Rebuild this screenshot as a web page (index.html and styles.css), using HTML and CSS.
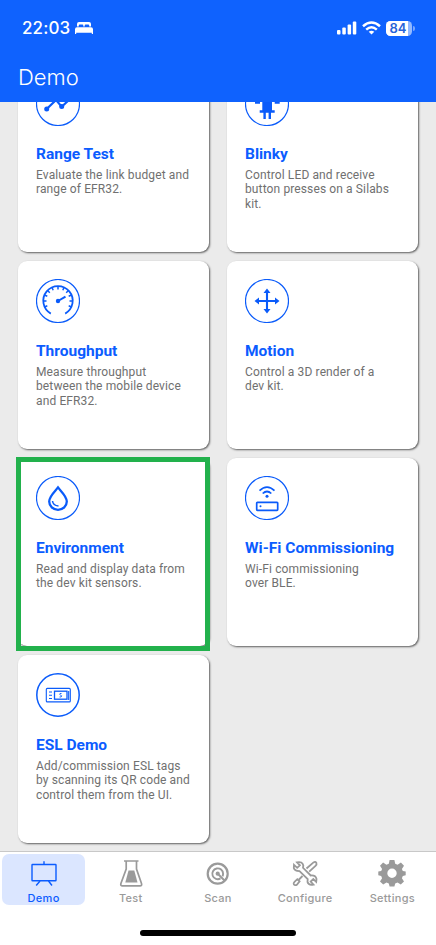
FILE: index.html
```html
<!DOCTYPE html>
<html lang="en">
<head>
<meta charset="utf-8">
<title>Demo</title>
<link rel="stylesheet" href="styles.css">
</head>
<body>
<div class="app">
  <header class="header">
    <div class="status">
      <span class="time">22:03</span>
      <svg class="bed" width="18" height="12" viewBox="0 0 18 12" fill="#fff"><path d="M2 4.600V2Q2 0 4 0H14Q16 0 16 2V4.600H14.200V3.600Q14.200 2.600 13.300 2.600H10.500Q9.700 2.600 9.700 3.400V4.600H8.300V3.400Q8.300 2.600 7.500 2.600H4.700Q3.800 2.600 3.800 3.600V4.600Z"/><path d="M0 12V7.200Q0 5.200 2 5.200H16Q18 5.200 18 7.200V12H16.800V10.700H1.200V12Z"/></svg>
      <svg class="signal" width="20" height="14" viewBox="0 0 20 14" fill="#fff"><rect x="0" y="9" width="3.500" height="4.500" rx="1"/><rect x="5.300" y="6.500" width="3.500" height="7" rx="1"/><rect x="10.600" y="3.500" width="3.500" height="10" rx="1"/><rect x="15.800" y="0.500" width="3.500" height="13" rx="1"/></svg>
      <svg class="wifi" width="19" height="14" viewBox="0 0 19 14" fill="none" stroke="#fff" stroke-width="2.500"><path d="M1 5.200Q9.500-2.200 18 5.200"/><path d="M4.200 8.600Q9.500 4 14.800 8.600"/><path d="M6.700 10.800Q9.500 8.600 12.300 10.800L9.500 13.600Z" fill="#fff" stroke="none"/></svg>
      <span class="battery"><span class="level">84</span></span><span class="cap"></span>
    </div>
    <h1 class="title">Demo</h1>
  </header>

  <main class="grid">
    <section class="card">
      <svg class="icon" viewBox="0 0 44 44"><circle class="ring" cx="22" cy="22" r="21.500"/><path d="M10.700 27L20 18L25.700 24.700L34 17" stroke-width="2.200"/><g class="solid"><circle cx="10.700" cy="27" r="2.500"/><circle cx="20" cy="17.500" r="2"/><circle cx="25.700" cy="24.500" r="2.500"/></g></svg>
      <h2>Range Test</h2>
      <p>Evaluate the link budget and<br>range of EFR32.</p>
    </section>
    <section class="card">
      <svg class="icon" viewBox="0 0 44 44"><circle class="ring" cx="22" cy="22" r="21.500"/><path class="solid" d="M17.300 9H27V28.300H29.700V30.800H26V37H23.600V30.800H20.800V37H18.400V30.800H14.700V28.300H17.300ZM10 17H15V21.800H10ZM29.700 17H34.700V21.800H29.700Z"/></svg>
      <h2>Blinky</h2>
      <p>Control LED and receive<br>button presses on a Silabs<br>kit.</p>
    </section>
    <section class="card">
      <svg class="icon" viewBox="0 0 44 44"><circle class="ring" cx="22" cy="22" r="21.500"/><path d="M14.800 34.600A14.700 14.700 0 1 1 29.200 34.600" stroke-width="1.800"/><path d="M22 7.500V10.500M7.500 22H10.500M36.500 22H33.500M11.800 11.800L13.800 13.800M32.200 11.800L30.200 13.800M8.500 16L11.300 17.200M35.500 16L32.700 17.200M16 8.500L17.200 11.300M28 8.500L26.800 11.300M8.500 28L11.300 26.800M35.500 28L32.700 26.800" stroke-width="1.500"/><path d="M22 22L29.500 17.700" stroke-width="2"/><circle class="solid" cx="22" cy="22" r="2.200"/></svg>
      <h2>Throughput</h2>
      <p>Measure throughput<br>between the mobile device<br>and EFR32.</p>
    </section>
    <section class="card">
      <svg class="icon" viewBox="0 0 44 44"><circle class="ring" cx="22" cy="22" r="21.500"/><path d="M22 12V32M12 22H32" stroke-width="2.100"/><path class="solid" d="M22 9.500L25.500 14H18.500ZM22 34.500L18.500 30H25.500ZM9.500 22L14 18.500V25.500ZM34.500 22L30 25.500V18.500Z"/></svg>
      <h2>Motion</h2>
      <p>Control a 3D render of a<br>dev kit.</p>
    </section>
    <section class="card selected">
      <svg class="icon" viewBox="0 0 44 44"><circle class="ring" cx="22" cy="22" r="21.500"/><path d="M22 11.400C19.500 15 13.200 20 13.200 25.500A8.800 8.300 0 0 0 30.800 25.500C30.800 20 24.500 15 22 11.400Z" stroke-width="2.300"/><path d="M16.500 25Q17 29.500 22.500 30" stroke-width="1.500"/></svg>
      <h2>Environment</h2>
      <p>Read and display data from<br>the dev kit sensors.</p>
    </section>
    <section class="card">
      <svg class="icon" viewBox="0 0 44 44"><circle class="ring" cx="22" cy="22" r="21.500"/><path d="M14.500 14.700Q22 7.500 29.500 14.700M17.700 17.500Q22 13.500 26.300 17.500" stroke-width="1.700"/><circle class="solid" cx="22" cy="20.300" r="1.500"/><rect x="11.700" y="26.300" width="21" height="8" rx=".7" stroke-width="1.700"/><circle class="solid" cx="15.500" cy="30.300" r="1"/></svg>
      <h2>Wi-Fi Commissioning</h2>
      <p>Wi-Fi commissioning<br>over BLE.</p>
    </section>
    <section class="card">
      <svg class="icon" viewBox="0 0 44 44"><circle class="ring bold" cx="22" cy="22" r="21.200"/><rect x="10.300" y="15.400" width="24" height="13.500" rx="1" stroke-width="1.100"/><rect x="18.500" y="18.200" width="12.500" height="8" stroke-width="1.300"/><path d="M13 19H16M13 22.200H16M13 25.500H16M32.700 18V27" stroke-width="1.100"/><path d="M25.500 20.500Q23.500 20 23.700 21.500Q24.500 22.300 25.700 22.800Q25.700 24.500 23.500 24" stroke-width=".9"/></svg>
      <h2>ESL Demo</h2>
      <p>Add/commission ESL tags<br>by scanning its QR code and<br>control them from the UI.</p>
    </section>
  </main>

  <nav class="tabs">
    <a class="tab active"><svg viewBox="0 0 28 28"><rect x="2" y="5.500" width="24" height="16.300" rx=".5" stroke-width="1.400"/><path d="M14 2.200V5.500M10 22L6.200 26.500M18.500 22L22 26.500" stroke-width="1.400"/></svg><span>Demo</span></a>
    <a class="tab"><svg viewBox="0 0 28 28"><path d="M7 2H21.500M9.200 2.500V10L3.900 24.500Q3.200 26.900 5.500 26.900H23Q25.200 26.900 24.500 24.500L19.500 10V2.500" stroke-width="1.700"/><path class="fill" d="M11.500 11.500H17.300L20.500 23.500H8.300Z"/></svg><span>Test</span></a>
    <a class="tab"><svg viewBox="0 0 28 28"><circle cx="13.700" cy="14.700" r="10" stroke-width="2.200"/><path d="M16.500 19.400A5.400 5.400 0 1 1 19.100 14.700Q19.100 16 18.500 17.300" stroke-width="1.900"/><circle class="fill" cx="13.700" cy="14.700" r="2.100"/><path d="M14 15L20.500 21.500" stroke-width="2"/></svg><span>Scan</span></a>
    <a class="tab"><svg viewBox="0 0 28 28"><path d="M3 5.800L6.200 8.800L8.900 6.300L6 3.300Q11.500 2.200 12.300 6.500L12 8.800L19.700 16.500Q24.700 16 25.500 20L25.200 22.800L22.300 20L19.700 22.500L22.500 25.600Q17.500 26.600 16.500 23L16.700 20.200L8.500 12.200Q3.500 12 2.800 9Z" stroke-width="1.800"/><path d="M15.500 9.500L22.500 3.400Q24.500 2.200 25.400 4Q26 5.500 24.500 6.900L18.200 12.600M11.500 17L8 20.500M3.500 22.800L6.300 20.200L8.600 22.400L6.200 25.400Q4 27 2.800 25.200Q2.200 24 3.500 22.800Z" stroke-width="1.800"/></svg><span>Configure</span></a>
    <a class="tab"><svg viewBox="0 0 28 28"><path class="fill" fill-rule="evenodd" d="M11.600 1H16.400L17.200 4.700L19.600 5.700L22.900 3.500L26 6.700L23.900 10L24.800 12L27.700 12.500V16.200L24.800 17L23.900 19.300L26 22.500L22.800 25.500L19.500 23.500L17.200 24.500L16.400 27.500H11.600L10.800 24.500L8.500 23.500L5.200 25.500L2 22.500L4.100 19.300L3.200 17L.3 16.200V12.500L3.200 12L4.100 10L2 6.700L5.100 3.500L8.400 5.700L10.800 4.700ZM14 9.500A4.700 4.700 0 1 0 14 18.900A4.700 4.700 0 1 0 14 9.500Z"/></svg><span>Settings</span></a>
  </nav>
  <div class="home"></div>
</div>
</body>
</html>
```

FILE: styles.css
```css
*, *::after { box-sizing: border-box; }
body { margin: 0; }
.app { width: 436px; height: 945px; display: flex; flex-direction: column; overflow: hidden; background: #fff; font-family: Roboto, sans-serif; }
.header { height: 102px; flex: none; background: #0f62fe; color: #fff; }
.status { height: 56px; padding: 0 21px 0 22px; display: flex; align-items: center; font-family: Inter, sans-serif; }
.time { width: 53px; font-size: 17px; font-weight: 500; letter-spacing: .1px; }
.signal { margin-left: auto; margin-right: 5px; }
.wifi { margin-right: 5px; }
.battery { width: 26px; height: 15px; border-radius: 4.500px; overflow: hidden; background: #93b9ff; }
.level { display: block; width: 22px; height: 15px; padding-left: 2px; background: #fff; color: #2864d8; font-size: 13px; line-height: 15px; font-weight: 600; text-align: center; }
.cap { width: 2px; height: 5px; margin-left: 1px; border-radius: 0 2px 2px 0; background: #78a6ff; }
.title { margin: 0; padding-left: 18px; font-family: Inter, sans-serif; font-size: 22px; line-height: 43px; font-weight: 300; }

.grid { flex: none; height: 749px; overflow: hidden; padding: 0 18px 8px; background: #ebebeb; display: grid; grid-template-columns: 191px 191px; grid-auto-rows: 188px; gap: 9px 18px; align-content: end; }
.card { position: relative; padding: 18px 0 0 18px; border-radius: 9px; background: #fff; box-shadow: 1px 1px 2px rgba(0, 0, 0, .6); }
.icon { display: block; width: 44px; height: 44px; fill: none; stroke: #0a5bfa; }
.ring { stroke-width: 1.200; }
.ring.bold { stroke-width: 1.500; }
.solid { fill: #0a5bfa; stroke: none; }
.card h2 { margin: 18px 0 0; color: #0b5cff; font-size: 15.500px; line-height: 20px; font-weight: 700; white-space: nowrap; }
.card p { margin: 4px 0 0; color: #707070; font-size: 12px; line-height: 14.400px; letter-spacing: .120px; white-space: nowrap; }
.selected::after { content: ""; position: absolute; left: -2px; top: -1px; width: 194px; height: 194px; border: 5px solid #22b14c; z-index: 1; }

.tabs { flex: none; height: 57px; border-top: 1px solid #c8c8c8; padding-top: 2px; display: flex; }
.tab { width: 83px; height: 51px; margin: 0 2.100px; padding-top: 5px; display: flex; flex-direction: column; align-items: center; border-radius: 7px; color: #9a9a9a; }
.tab.active { background: #dbe6ff; color: #0b5cff; }
.tab svg { width: 28px; height: 28px; fill: none; stroke: currentColor; }
.tab .fill { fill: currentColor; stroke: none; }
.tab span { font-family: Inter, sans-serif; font-size: 11px; line-height: 14px; font-weight: 500; letter-spacing: .3px; margin-top: 4px; }
.home { width: 156px; height: 6px; margin: 22px auto 0; border-radius: 3px; background: #000; }
```
